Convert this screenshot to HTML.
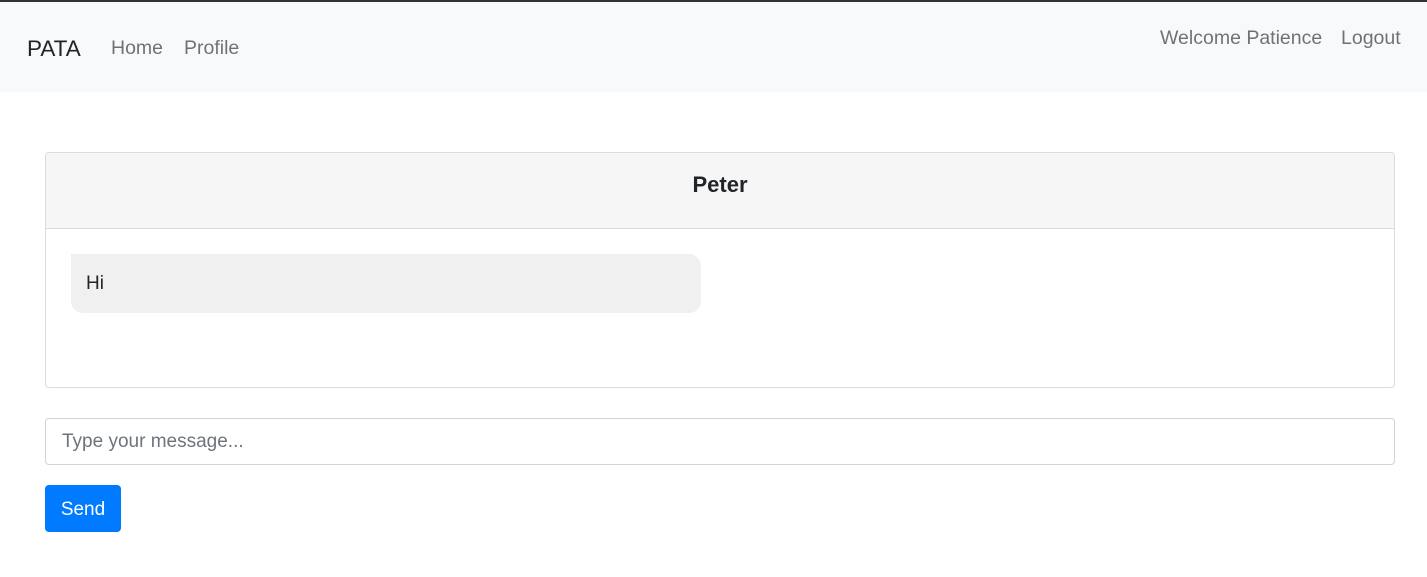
<!DOCTYPE html>
<html><head><style>
*{box-sizing:border-box;margin:0;padding:0}
body{width:1427px;height:577px;background:#fff;font-family:"Segoe UI","Liberation Sans",sans-serif;position:relative;overflow:hidden;color:#212529}
.top{position:absolute;left:0;top:0;width:1427px;height:2px;background:#333}
.nav{position:absolute;left:0;top:2px;width:1427px;height:90px;background:#f8f9fa}
.t{position:absolute;white-space:nowrap}
.brand{left:27px;top:34px;font-size:22.5px;color:#212529}
.link{font-size:19.5px;color:rgba(0,0,0,.55)}
.card{position:absolute;left:45px;top:152px;width:1350px;height:236px;border:1px solid #dcdcdc;border-radius:4px;overflow:hidden}
.hdr{height:76px;background:#f6f6f6;border-bottom:1px solid #dcdcdc;text-align:center;font-weight:bold;font-size:22px;line-height:64px;padding-top:0}
.bub{position:absolute;left:25px;top:101px;width:630px;height:59px;background:#f0f0f0;border-radius:0 12px 12px 12px;font-size:19px;padding:19px 0 0 15px}
.inp{position:absolute;left:45px;top:418px;width:1350px;height:47px;border:1px solid #ced4da;border-radius:4px;font-size:19px;color:#6c757d;padding:12px 0 0 16px}
.btn{position:absolute;left:45px;top:485px;width:76px;height:47px;background:#007bff;border-radius:4px;color:#fff;font-size:19px;text-align:center;line-height:50px}
</style></head><body>
<div class="top"></div>
<div class="nav">
<div class="t brand">PATA</div>
<div class="t link" style="left:111px;top:35px">Home</div>
<div class="t link" style="left:184px;top:35px">Profile</div>
<div class="t link" style="left:1160px;top:25px">Welcome Patience</div>
<div class="t link" style="left:1341px;top:25px">Logout</div>
</div>
<div class="card"><div class="hdr">Peter</div><div class="bub">Hi</div></div>
<div class="inp">Type your message...</div>
<div class="btn">Send</div>
</body></html>
